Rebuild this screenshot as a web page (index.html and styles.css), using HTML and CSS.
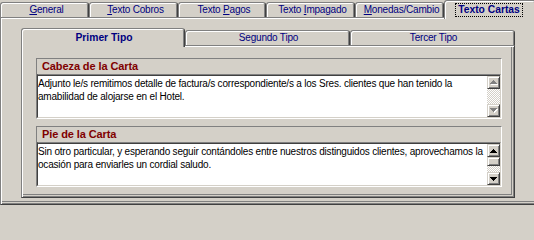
FILE: index.html
```html
<!DOCTYPE html>
<html lang="es">
<head>
<meta charset="utf-8">
<title>Texto Cartas</title>
<link rel="stylesheet" href="styles.css">
</head>
<body>
<div class="window">
  <div class="tabs outer-tabs">
    <div class="tab outer-tab w89"><u>G</u>eneral</div>
    <div class="tab outer-tab w89"><u>T</u>exto Cobros</div>
    <div class="tab outer-tab w88">Texto <u>P</u>agos</div>
    <div class="tab outer-tab w89">Texto <u>I</u>mpagado</div>
    <div class="tab outer-tab w89"><u>M</u>onedas/Cambio</div>
    <div class="tab outer-tab active w92"><span class="focus">Texto Cartas</span></div>
  </div>
  <div class="sheet outer-sheet">
    <div class="sheet-body outer-body">
      <div class="tabs inner-tabs">
        <div class="tab inner-tab active w164">Primer Tipo</div>
        <div class="tab inner-tab w165">Segundo Tipo</div>
        <div class="tab inner-tab w165">Tercer Tipo</div>
      </div>
      <div class="sheet inner-sheet">
        <div class="sheet-body inner-body">
          <div class="group">
            <div class="group-title">Cabeza de la Carta</div>
            <div class="memo">
              <div class="memo-text">Adjunto le/s remitimos detalle de factura/s correspondiente/s a los Sres. clientes que han tenido la<br>amabilidad de alojarse en el Hotel.</div>
              <div class="scrollbar">
                <div class="sb-btn">
                  <svg class="arrow" width="8" height="5" viewBox="0 0 8 5" shape-rendering="crispEdges"><path fill="#fff" d="M4 1h1v1h-1zM3 2h3v1h-3zM2 3h5v1h-5zM1 4h7v1h-7z"/><path fill="#808080" d="M3 0h1v1h-1zM2 1h3v1h-3zM1 2h5v1h-5zM0 3h7v1h-7z"/></svg>
                </div>
                <div class="sb-track"></div>
                <div class="sb-btn">
                  <svg class="arrow" width="8" height="5" viewBox="0 0 8 5" shape-rendering="crispEdges"><path fill="#fff" d="M1 1h7v1h-7zM2 2h5v1h-5zM3 3h3v1h-3zM4 4h1v1h-1z"/><path fill="#808080" d="M0 0h7v1h-7zM1 1h5v1h-5zM2 2h3v1h-3zM3 3h1v1h-1z"/></svg>
                </div>
              </div>
            </div>
          </div>
          <div class="group">
            <div class="group-title">Pie de la Carta</div>
            <div class="memo">
              <div class="memo-text">Sin otro particular, y esperando seguir contándoles entre nuestros distinguidos clientes, aprovechamos la<br>ocasión para enviarles un cordial saludo.</div>
              <div class="scrollbar">
                <div class="sb-btn">
                  <svg class="arrow" width="7" height="4" viewBox="0 0 7 4" shape-rendering="crispEdges"><path fill="#000" d="M3 0h1v1h-1zM2 1h3v1h-3zM1 2h5v1h-5zM0 3h7v1h-7z"/></svg>
                </div>
                <div class="sb-thumb"></div>
                <div class="sb-track"></div>
                <div class="sb-btn">
                  <svg class="arrow" width="7" height="4" viewBox="0 0 7 4" shape-rendering="crispEdges"><path fill="#000" d="M0 0h7v1h-7zM1 1h5v1h-5zM2 2h3v1h-3zM3 3h1v1h-1z"/></svg>
                </div>
              </div>
            </div>
          </div>
        </div>
      </div>
    </div>
  </div>
</div>
</body>
</html>
```

FILE: styles.css
```css
html, body {
  margin: 0;
  padding: 0;
}

body {
  width: 534px;
  height: 205px;
  overflow: hidden;
  background: #d4d0c8;
  font-family: "Liberation Sans", Arial, sans-serif;
  font-size: 10px;
  letter-spacing: -0.2px;
  color: #000;
}

.window {
  width: 540px;
}

/* ---------- tabs ---------- */
.tabs {
  display: flex;
  align-items: flex-end;
  height: 17px;
}

.tab {
  box-sizing: border-box;
  height: 15px;
  border: 1px solid;
  border-bottom: 0;
  border-color: #808080 #404040 transparent #808080;
  border-radius: 3px 3px 0 0;
  box-shadow: inset 1px 1px #fff, inset -1px 0 #808080;
  background: #d4d0c8;
  color: #000080;
  text-align: center;
  line-height: 13px;
  white-space: nowrap;
  flex: none;
}

.outer-tab {
  padding-left: 4px;
}

.inner-tab {
  padding-left: 2px;
}

.tab.active {
  height: 19px;
  margin-bottom: -2px;
  position: relative;
  z-index: 1;
  font-weight: bold;
  font-size: 10.3px;
  letter-spacing: 0;
}

.outer-tab.active {
  display: flex;
  justify-content: center;
  align-items: flex-start;
  padding: 2px 2px 0 0;
}

.inner-tab.active {
  padding-top: 2px;
}

.focus {
  display: inline-block;
  border: 1px dotted #000;
  line-height: 12px;
  padding: 0 2px;
}

.w88 { width: 88px; }
.w89 { width: 89px; }
.w92 { width: 92px; }
.w164 { width: 164px; }
.w165 { width: 165px; }

/* ---------- sheets ---------- */
.sheet {
  box-sizing: border-box;
  border: 1px solid;
  border-color: #808080 #404040 #404040 #808080;
  padding: 1px;
  box-shadow: inset 1px 1px #fff, inset -1px -1px #808080;
  display: flex;
  flex-direction: column;
}

.sheet-body {
  flex: 1;
  margin: 0 1px 1px 0;
  border-right: 1px solid #808080;
  border-bottom: 1px solid #808080;
}

.outer-sheet {
  height: 188px;
}

.outer-body {
  padding: 9px 0 0 19px;
}

.inner-tabs {
  width: 494px;
}

.inner-sheet {
  width: 494px;
  height: 153px;
}

.inner-body {
  padding: 11px 0 0 13px;
}

/* ---------- groups ---------- */
.group {
  box-sizing: border-box;
  width: 466px;
  height: 61px;
  border: 1px solid;
  border-color: #808080 #fff #fff #808080;
  display: flex;
  flex-direction: column;
}

.group + .group {
  margin-top: 7px;
}

.group-title {
  height: 15px;
  line-height: 15px;
  padding-left: 5px;
  font-weight: bold;
  font-size: 11px;
  letter-spacing: -0.1px;
  color: #800000;
}

.memo {
  flex: 1;
  display: flex;
  background: #fff;
  border-top: 1px solid #808080;
  border-left: 1px solid #404040;
  border-right: 1px solid #d4d0c8;
  border-bottom: 1px solid #d4d0c8;
  padding-top: 1px;
  box-shadow: inset 0 1px #404040;
}

.memo-text {
  flex: 1;
  padding-top: 1px;
  line-height: 13px;
  white-space: nowrap;
  overflow: hidden;
}

/* ---------- scrollbars ---------- */
.scrollbar {
  width: 13px;
  display: flex;
  flex-direction: column;
  background: repeating-conic-gradient(#fff 0 25%, #d4d0c8 0 50%) 0 0 / 2px 2px;
}

.sb-btn,
.sb-thumb {
  box-sizing: border-box;
  border: 1px solid;
  border-color: #d4d0c8 #404040 #404040 #d4d0c8;
  box-shadow: inset 1px 1px #fff, inset -1px -1px #808080;
  background: #d4d0c8;
}

.sb-btn {
  height: 13px;
  display: flex;
  align-items: center;
  justify-content: center;
}

.sb-thumb {
  height: 9px;
}

.sb-track {
  flex: 1;
}

.arrow {
  display: block;
}
```
